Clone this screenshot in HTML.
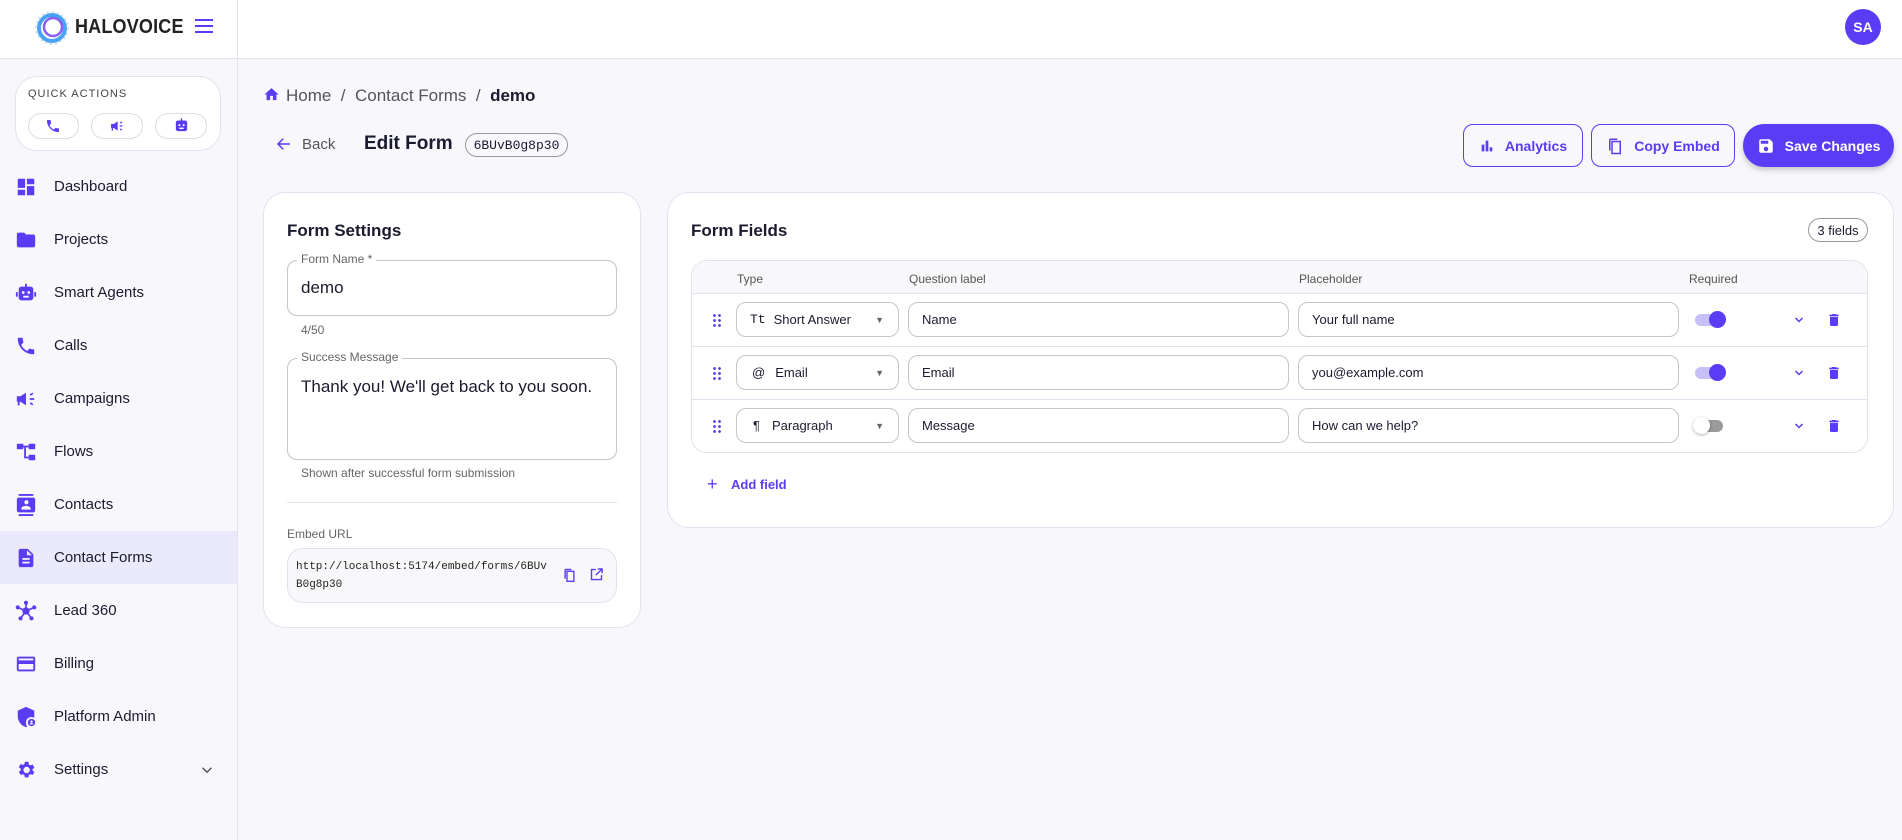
<!DOCTYPE html>
<html><head><meta charset="utf-8"><style>
*{box-sizing:border-box;margin:0;padding:0}
body{width:1902px;height:840px;background:#f7f7fc;font-family:"Liberation Sans",sans-serif;color:#1b1b2f;position:relative;overflow:hidden}
.a{position:absolute}
.hdr{left:0;top:0;width:1902px;height:59px;background:#fff;border-bottom:1px solid #e2e2ea}
.side{left:0;top:0;width:238px;height:840px;border-right:1px solid #e2e2ea}
.nav{left:0;width:237px;height:53px;display:flex;align-items:center;font-size:15px;color:#1b1b2f}
.nav svg{position:absolute;left:15px;width:22px;height:22px}
.nav span{position:absolute;left:54px}
.card{background:#fff;border:1px solid #e2e2ee;border-radius:22px}
.inp{border:1px solid #c4c4cc;border-radius:10px;background:#fff;font-size:13px;display:flex;align-items:center;padding-left:13px;color:#1b1b2f}
.btn{border:1px solid #5b3cf5;border-radius:10px;color:#5b3cf5;font-size:14px;font-weight:bold;display:flex;align-items:center;justify-content:center;gap:10px}
.lbl{font-size:12px;color:#666;background:#fff;padding:0 4px}
.P{fill:#5b3cf5}
</style></head><body>
<div class="a hdr"></div>
<div class="a side"></div>
<svg class="a" style="left:33px;top:9px" width="38" height="38" viewBox="0 0 38 38"><circle cx="19" cy="19" r="13" fill="none" stroke="#4aa3f0" stroke-width="4"/><circle cx="20" cy="18" r="9" fill="none" stroke="#8a5cf6" stroke-width="2.5"/><circle cx="19" cy="19" r="16" fill="none" stroke="#9ac8f5" stroke-width="1" stroke-dasharray="2 3"/></svg>
<div class="a" style="left:75px;top:16px;font-size:20px;font-weight:bold;color:#222;letter-spacing:0.2px;transform:scaleX(.9);transform-origin:left">HALOVOICE</div>
<div class="a" style="left:195px;top:19px;width:18px;height:2px;background:#5b3cf5;box-shadow:0 6px 0 #5b3cf5,0 12px 0 #5b3cf5"></div>
<div class="a" style="left:1845px;top:9px;width:36px;height:36px;border-radius:50%;background:#5b3cf5;color:#fff;font-size:14px;font-weight:bold;display:flex;align-items:center;justify-content:center">SA</div>
<div class="a" style="left:15px;top:76px;width:206px;height:75px;background:#fff;border:1px solid #e2e2ee;border-radius:22px"></div>
<div class="a" style="left:28px;top:88px;font-size:11px;letter-spacing:1px;color:#444">QUICK ACTIONS</div>
<div class="a" style="left:28px;top:113px;width:51px;height:26px;border:1px solid #dcdce6;border-radius:13px;background:#fff"></div>
<div class="a" style="left:91px;top:113px;width:52px;height:26px;border:1px solid #dcdce6;border-radius:13px;background:#fff"></div>
<div class="a" style="left:155px;top:113px;width:52px;height:26px;border:1px solid #dcdce6;border-radius:13px;background:#fff"></div>
<svg class="a" style="left:45px;top:118px" width="16" height="16" viewBox="0 0 24 24"><path class="P" d="M6.6 10.8c1.4 2.8 3.8 5.1 6.6 6.6l2.2-2.2c.3-.3.7-.4 1-.2 1.1.4 2.3.6 3.6.6.6 0 1 .4 1 1V20c0 .6-.4 1-1 1C10.6 21 3 13.4 3 4c0-.6.4-1 1-1h3.5c.6 0 1 .4 1 1 0 1.3.2 2.5.6 3.6.1.3 0 .7-.2 1L6.6 10.8z"/></svg>
<svg class="a" style="left:109px;top:118px" width="16" height="16" viewBox="0 0 24 24"><path class="P" d="M3 9h4l6-4v14l-6-4H6v4H4v-4H3zM16 11h4v2h-4zM16 7l3-2 1 1.5-3 2zM16 17l3 2 1-1.5-3-2z"/></svg>
<svg class="a" style="left:173px;top:117px" width="17" height="17" viewBox="0 0 24 24"><path class="P" d="M11 2h2v3h4a3 3 0 013 3v9a3 3 0 01-3 3H7a3 3 0 01-3-3V8a3 3 0 013-3h4zM9 10a1.5 1.5 0 100 3 1.5 1.5 0 000-3zm6 0a1.5 1.5 0 100 3 1.5 1.5 0 000-3zM9 15v2h6v-2z"/></svg>
<div class="a" style="left:0;top:531px;width:237px;height:53px;background:#ebe9fc"></div>
<div class="a nav" style="top:160px"><svg viewBox="0 0 24 24"><path class="P" d="M3 13h8V3H3zm0 8h8v-6H3zm10 0h8V11h-8zm0-18v6h8V3z"/></svg><span>Dashboard</span></div>
<div class="a nav" style="top:213px"><svg viewBox="0 0 24 24"><path class="P" d="M10 4H4c-1.1 0-2 .9-2 2v12c0 1.1.9 2 2 2h16c1.1 0 2-.9 2-2V8c0-1.1-.9-2-2-2h-8z"/></svg><span>Projects</span></div>
<div class="a nav" style="top:266px"><svg viewBox="0 0 24 24"><path class="P" d="M11 2h2v3h4a3 3 0 013 3v9a3 3 0 01-3 3H7a3 3 0 01-3-3V8a3 3 0 013-3h4zM9 10a1.5 1.5 0 100 3 1.5 1.5 0 000-3zm6 0a1.5 1.5 0 100 3 1.5 1.5 0 000-3zM9 15v2h6v-2zM1 11h2v5H1zm20 0h2v5h-2z"/></svg><span>Smart Agents</span></div>
<div class="a nav" style="top:319px"><svg viewBox="0 0 24 24"><path class="P" d="M6.6 10.8c1.4 2.8 3.8 5.1 6.6 6.6l2.2-2.2c.3-.3.7-.4 1-.2 1.1.4 2.3.6 3.6.6.6 0 1 .4 1 1V20c0 .6-.4 1-1 1C10.6 21 3 13.4 3 4c0-.6.4-1 1-1h3.5c.6 0 1 .4 1 1 0 1.3.2 2.5.6 3.6.1.3 0 .7-.2 1L6.6 10.8z"/></svg><span>Calls</span></div>
<div class="a nav" style="top:372px"><svg viewBox="0 0 24 24"><path class="P" d="M2 9h4l6-4v14l-6-4H5v4H3v-4H2zM16 11h5v2h-5zM16 7l3-2 1 1.5-3 2zM16 17l3 2 1-1.5-3-2z"/></svg><span>Campaigns</span></div>
<div class="a nav" style="top:425px"><svg viewBox="0 0 24 24"><path class="P" d="M2 3h7v6H2zm13 0h7v6h-7zm0 12h7v6h-7zM9 5h6v2h-3v10h3v2h-5V7H9z"/></svg><span>Flows</span></div>
<div class="a nav" style="top:478px"><svg viewBox="0 0 24 24"><path class="P" d="M4 0h16v2H4zm0 22h16v2H4zM20 4H4c-1.1 0-2 .9-2 2v12c0 1.1.9 2 2 2h16c1.1 0 2-.9 2-2V6c0-1.1-.9-2-2-2zm-8 2.8a2.3 2.3 0 110 4.5 2.3 2.3 0 010-4.5zM17 17H7v-1.5c0-1.7 3.3-2.5 5-2.5s5 .8 5 2.5z"/></svg><span>Contacts</span></div>
<div class="a nav" style="top:531px"><svg viewBox="0 0 24 24"><path class="P" d="M14 2H6c-1.1 0-2 .9-2 2v16c0 1.1.9 2 2 2h12c1.1 0 2-.9 2-2V8zm2 16H8v-2h8zm0-4H8v-2h8zm-3-5V3.5L18.5 9z"/></svg><span>Contact Forms</span></div>
<div class="a nav" style="top:584px"><svg viewBox="0 0 24 24"><g class="P"><circle cx="12" cy="12" r="4"/><circle cx="12" cy="3" r="2.2"/><circle cx="3" cy="8" r="2.2"/><circle cx="21" cy="8" r="2.2"/><circle cx="6" cy="20" r="2.2"/><circle cx="18" cy="20" r="2.2"/></g><path d="M12 3v9M3 8l9 4 9-4M6 20l6-8 6 8" stroke="#5b3cf5" stroke-width="1.8" fill="none"/></svg><span>Lead 360</span></div>
<div class="a nav" style="top:637px"><svg viewBox="0 0 24 24"><path class="P" d="M20 4H4c-1.1 0-2 .9-2 2v12c0 1.1.9 2 2 2h16c1.1 0 2-.9 2-2V6c0-1.1-.9-2-2-2zm0 14H4v-6h16zm0-10H4V6h16z"/></svg><span>Billing</span></div>
<div class="a nav" style="top:690px"><svg viewBox="0 0 24 24"><path class="P" d="M12 1L3 5v6c0 5.5 3.8 10.7 9 12 .5-.1 1-.3 1.4-.5A6 6 0 0112 18a6 6 0 019-5.2V5z"/><circle cx="18" cy="18" r="4" fill="#5b3cf5"/><circle cx="18" cy="17" r="1.2" fill="#fff"/><path d="M15.8 20c.5-1 1.3-1.4 2.2-1.4s1.7.4 2.2 1.4" fill="#fff"/></svg><span>Platform Admin</span></div>
<div class="a nav" style="top:743px"><svg viewBox="0 0 24 24"><path class="P" d="M19.1 12.9a7 7 0 000-1.8l2.1-1.6-2-3.5-2.5 1a7 7 0 00-1.6-.9L14.7 3h-4l-.4 2.6c-.6.2-1.1.5-1.6.9l-2.5-1-2 3.5 2.1 1.6a7 7 0 000 1.8l-2.1 1.6 2 3.5 2.5-1c.5.4 1 .7 1.6.9l.4 2.6h4l.4-2.6c.6-.2 1.1-.5 1.6-.9l2.5 1 2-3.5zM12.7 15.5a3.5 3.5 0 110-7 3.5 3.5 0 010 7z"/></svg><span>Settings</span><svg viewBox="0 0 24 24" style="left:198px;width:18px;height:18px"><path d="M6 9l6 6 6-6" stroke="#555" stroke-width="2" fill="none"/></svg></div>
<svg class="a" style="left:263px;top:86px" width="17" height="17" viewBox="0 0 24 24"><path class="P" d="M10 20v-6h4v6h5v-8h3L12 3 2 12h3v8z"/></svg>
<div class="a" style="left:286px;top:86px;font-size:17px;color:#555">Home &nbsp;/&nbsp; Contact Forms &nbsp;/&nbsp; <b style="color:#1b1b2f">demo</b></div>
<svg class="a" style="left:275px;top:135px" width="18" height="18" viewBox="0 0 24 24"><path d="M20 12H5m6-7l-7 7 7 7" stroke="#5b3cf5" stroke-width="2" fill="none"/></svg>
<div class="a" style="left:302px;top:136px;font-size:15px;color:#555">Back</div>
<div class="a" style="left:364px;top:133px;font-size:19px;font-weight:bold">Edit Form</div>
<div class="a" style="left:465px;top:133px;width:103px;height:24px;border:1px solid #999;border-radius:12px;font-family:'Liberation Mono',monospace;font-size:13px;display:flex;align-items:center;justify-content:center">6BUvB0g8p30</div>
<div class="a btn" style="left:1463px;top:124px;width:120px;height:43px"><svg width="16" height="16" viewBox="0 0 24 24"><path class="P" d="M4 10h4v10H4zm6-6h4v16h-4zm6 10h4v6h-4z"/></svg>Analytics</div>
<div class="a btn" style="left:1591px;top:124px;width:144px;height:43px"><svg width="18" height="20" viewBox="0 0 24 24"><path d="M8 6h11v16H8zM5 3h10M5 3v15" stroke="#5b3cf5" stroke-width="2" fill="none"/></svg>Copy Embed</div>
<div class="a btn" style="left:1743px;top:124px;width:151px;height:43px;background:#5b3cf5;color:#fff;border-radius:22px;box-shadow:0 3px 6px rgba(0,0,0,.2)"><svg width="18" height="18" viewBox="0 0 24 24"><path fill="#fff" d="M17 3H5c-1.1 0-2 .9-2 2v14c0 1.1.9 2 2 2h14c1.1 0 2-.9 2-2V7zm-5 16a3 3 0 110-6 3 3 0 010 6zm3-10H5V5h10z"/></svg>Save Changes</div>
<div class="a card" style="left:263px;top:192px;width:378px;height:436px"></div>
<div class="a" style="left:287px;top:221px;font-size:17px;font-weight:bold">Form Settings</div>
<div class="a inp" style="left:287px;top:260px;width:330px;height:56px;font-size:17px">demo</div>
<div class="a lbl" style="left:297px;top:252px">Form Name *</div>
<div class="a" style="left:301px;top:323px;font-size:12px;color:#666">4/50</div>
<div class="a inp" style="left:287px;top:358px;width:330px;height:102px;font-size:17px;align-items:flex-start;padding-top:18px">Thank you! We'll get back to you soon.</div>
<div class="a lbl" style="left:297px;top:350px">Success Message</div>
<div class="a" style="left:301px;top:466px;font-size:12px;color:#666">Shown after successful form submission</div>
<div class="a" style="left:287px;top:502px;width:330px;height:1px;background:#e2e2ee"></div>
<div class="a" style="left:287px;top:527px;font-size:12px;color:#666">Embed URL</div>
<div class="a" style="left:287px;top:548px;width:330px;height:55px;background:#f8f8fa;border:1px solid #e2e2ee;border-radius:16px"></div>
<div class="a" style="left:296px;top:558px;font-family:'Liberation Mono',monospace;font-size:11px;line-height:18px;color:#222">http://localhost:5174/embed/forms/6BUv<br>B0g8p30</div>
<svg class="a" style="left:562px;top:567px" width="15" height="16" viewBox="0 0 24 24"><path d="M8 6h11v16H8zM5 3h10M5 3v15" stroke="#5b3cf5" stroke-width="2.2" fill="none"/></svg>
<svg class="a" style="left:589px;top:567px" width="15" height="15" viewBox="0 0 24 24"><path d="M11 4H4v16h16v-7M14 3h7v7M21 3L11 13" stroke="#5b3cf5" stroke-width="2.2" fill="none"/></svg>
<div class="a card" style="left:667px;top:192px;width:1227px;height:336px"></div>
<div class="a" style="left:691px;top:221px;font-size:17px;font-weight:bold">Form Fields</div>
<div class="a" style="left:1808px;top:218px;width:60px;height:24px;border:1px solid #999;border-radius:12px;font-size:13px;display:flex;align-items:center;justify-content:center">3 fields</div>
<div class="a" style="left:691px;top:260px;width:1177px;height:193px;border:1px solid #e2e2ee;border-radius:16px;overflow:hidden;background:#fff">
 <div style="height:33px;background:#f8f8fa;border-bottom:1px solid #e2e2ee;font-size:12px;color:#555;position:relative">
  <span class="a" style="left:45px;top:11px">Type</span><span class="a" style="left:217px;top:11px">Question label</span><span class="a" style="left:607px;top:11px">Placeholder</span><span class="a" style="left:997px;top:11px">Required</span>
 </div>
</div>
<div class="a" style="left:691px;top:346px;width:1177px;height:1px;background:#e2e2ee"></div>
<div class="a" style="left:691px;top:399px;width:1177px;height:1px;background:#e2e2ee"></div>
<div class="a" style="left:0;top:293px;width:1902px;height:53px">
 <div class="a" style="left:712px;top:20px;width:10px;height:14px;background:radial-gradient(circle,#5b3cf5 1.2px,transparent 1.6px) 0 0/5px 5px"></div>
 <div class="a inp" style="left:736px;top:9px;width:163px;height:35px"><span style="font-family:'Liberation Mono',monospace;margin-right:8px">Tt</span>Short Answer<span style="position:absolute;right:14px;font-size:9px;color:#666">&#9660;</span></div>
 <div class="a inp" style="left:908px;top:9px;width:381px;height:35px">Name</div>
 <div class="a inp" style="left:1298px;top:9px;width:381px;height:35px">Your full name</div>
 <div class="a" style="left:1695px;top:21px;width:26px;height:12px;border-radius:6px;background:#c5c0f8"></div>
 <div class="a" style="left:1709px;top:18px;width:17px;height:17px;border-radius:50%;background:#5b3cf5"></div>
 <svg class="a" style="left:1793px;top:21px" width="12" height="12" viewBox="0 0 24 24"><path d="M5 8l7 7 7-7" stroke="#5b3cf5" stroke-width="3" fill="none"/></svg>
 <svg class="a" style="left:1826px;top:18px" width="16" height="18" viewBox="0 0 24 24"><path class="P" d="M6 19c0 1.1.9 2 2 2h8c1.1 0 2-.9 2-2V7H6zM19 4h-3.5l-1-1h-5l-1 1H5v2h14z"/></svg>
</div>
<div class="a" style="left:0;top:346px;width:1902px;height:53px">
 <div class="a" style="left:712px;top:20px;width:10px;height:14px;background:radial-gradient(circle,#5b3cf5 1.2px,transparent 1.6px) 0 0/5px 5px"></div>
 <div class="a inp" style="left:736px;top:9px;width:163px;height:35px"><span style="margin-right:10px;margin-left:2px">@</span>Email<span style="position:absolute;right:14px;font-size:9px;color:#666">&#9660;</span></div>
 <div class="a inp" style="left:908px;top:9px;width:381px;height:35px">Email</div>
 <div class="a inp" style="left:1298px;top:9px;width:381px;height:35px">you@example.com</div>
 <div class="a" style="left:1695px;top:21px;width:26px;height:12px;border-radius:6px;background:#c5c0f8"></div>
 <div class="a" style="left:1709px;top:18px;width:17px;height:17px;border-radius:50%;background:#5b3cf5"></div>
 <svg class="a" style="left:1793px;top:21px" width="12" height="12" viewBox="0 0 24 24"><path d="M5 8l7 7 7-7" stroke="#5b3cf5" stroke-width="3" fill="none"/></svg>
 <svg class="a" style="left:1826px;top:18px" width="16" height="18" viewBox="0 0 24 24"><path class="P" d="M6 19c0 1.1.9 2 2 2h8c1.1 0 2-.9 2-2V7H6zM19 4h-3.5l-1-1h-5l-1 1H5v2h14z"/></svg>
</div>
<div class="a" style="left:0;top:399px;width:1902px;height:53px">
 <div class="a" style="left:712px;top:20px;width:10px;height:14px;background:radial-gradient(circle,#5b3cf5 1.2px,transparent 1.6px) 0 0/5px 5px"></div>
 <div class="a inp" style="left:736px;top:9px;width:163px;height:35px"><span style="margin-right:12px;margin-left:3px">&para;</span>Paragraph<span style="position:absolute;right:14px;font-size:9px;color:#666">&#9660;</span></div>
 <div class="a inp" style="left:908px;top:9px;width:381px;height:35px">Message</div>
 <div class="a inp" style="left:1298px;top:9px;width:381px;height:35px">How can we help?</div>
 <div class="a" style="left:1697px;top:21px;width:26px;height:12px;border-radius:6px;background:#9a9a9a"></div>
 <div class="a" style="left:1693px;top:18px;width:17px;height:17px;border-radius:50%;background:#fff;box-shadow:0 1px 3px rgba(0,0,0,.3)"></div>
 <svg class="a" style="left:1793px;top:21px" width="12" height="12" viewBox="0 0 24 24"><path d="M5 8l7 7 7-7" stroke="#5b3cf5" stroke-width="3" fill="none"/></svg>
 <svg class="a" style="left:1826px;top:18px" width="16" height="18" viewBox="0 0 24 24"><path class="P" d="M6 19c0 1.1.9 2 2 2h8c1.1 0 2-.9 2-2V7H6zM19 4h-3.5l-1-1h-5l-1 1H5v2h14z"/></svg>
</div>
<div class="a" style="left:707px;top:474px;font-size:18px;color:#5b3cf5">+</div>
<div class="a" style="left:731px;top:477px;font-size:13px;color:#5b3cf5;font-weight:bold">Add field</div>
</body></html>
